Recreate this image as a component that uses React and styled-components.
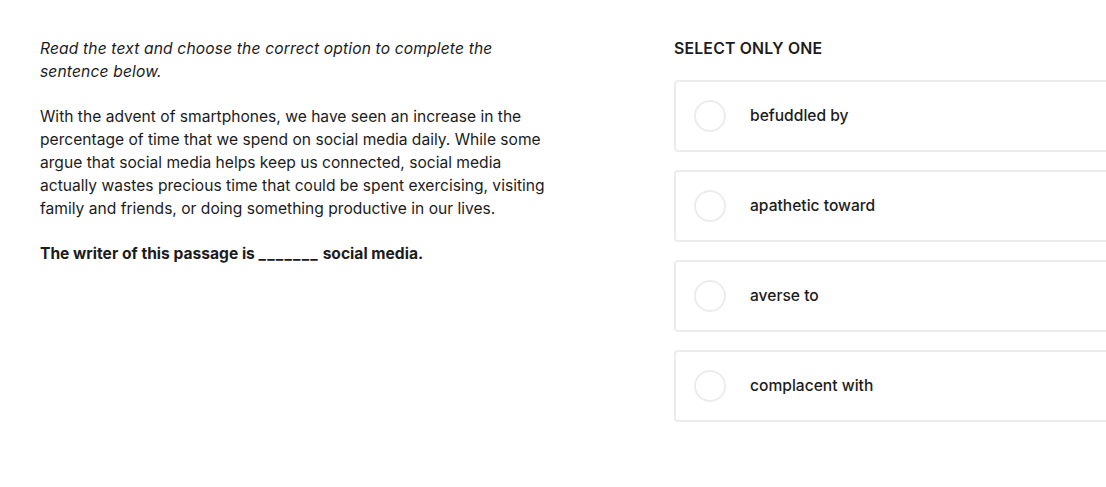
import React from "react";
import styled, { createGlobalStyle } from "styled-components";

const GlobalStyle = createGlobalStyle`
  html, body {
    margin: 0;
    padding: 0;
    background: #fff;
    overflow: hidden;
  }
  body {
    font-family: Inter, "Liberation Sans", sans-serif;
    color: #1c1c1c;
  }
`;

const options = ["befuddled by", "apathetic toward", "averse to", "complacent with"];

const App = () => {
  return (
    <>
      <GlobalStyle />
      <Page>
        <Passage>
          <Prompt>Read the text and choose the correct option to complete the sentence below.</Prompt>
          <Paragraph>
            With the advent of smartphones, we have seen an increase in the percentage of time that we
            spend on social media daily. While some argue that social media helps keep us connected,
            social media actually wastes precious time that could be spent exercising, visiting family
            and friends, or doing something productive in our lives.
          </Paragraph>
          <Question>
            The writer of this passage is <Blank>_______</Blank> social media.
          </Question>
        </Passage>
        <Answers>
          <Heading>SELECT ONLY ONE</Heading>
          <OptionList>
            {options.map((o) => (
              <Option key={o}>
                <Radio />
                <Label>{o}</Label>
              </Option>
            ))}
          </OptionList>
        </Answers>
      </Page>
    </>
  );
};

const Page = styled.div`
  display: flex;
  gap: 114px;
  padding: 37px 0 0 40px;
  width: 1200px;
`;

const Passage = styled.div`
  width: 520px;
  font-size: 15.6px;
  line-height: 23px;
`;

const Prompt = styled.p`
  margin: 0 0 22px;
  font-style: italic;
  letter-spacing: 0.15px;
  max-width: 475px;
`;

const Paragraph = styled.p`
  margin: 0 0 22px;
`;

const Question = styled.p`
  margin: 0;
  font-weight: 700;
`;

const Blank = styled.span`
  letter-spacing: 1.2px;
`;

const Answers = styled.div`
  width: 480px;
`;

const Heading = styled.h2`
  margin: 0 0 20px;
  font-size: 15.8px;
  line-height: 23px;
  font-weight: 600;
  letter-spacing: 0.2px;
`;

const OptionList = styled.div`
  display: flex;
  flex-direction: column;
  gap: 18px;
`;

const Option = styled.div`
  display: flex;
  align-items: center;
  gap: 24px;
  height: 68px;
  padding: 0 18px;
  border: 2px solid #ececec;
  border-radius: 4px;
`;

const Radio = styled.span`
  width: 28px;
  height: 28px;
  border: 2px solid #ececec;
  border-radius: 50%;
  flex-shrink: 0;
`;

const Label = styled.span`
  font-size: 15.6px;
  font-weight: 500;
  line-height: 23px;
  margin-top: -1px;
`;

export default App;
